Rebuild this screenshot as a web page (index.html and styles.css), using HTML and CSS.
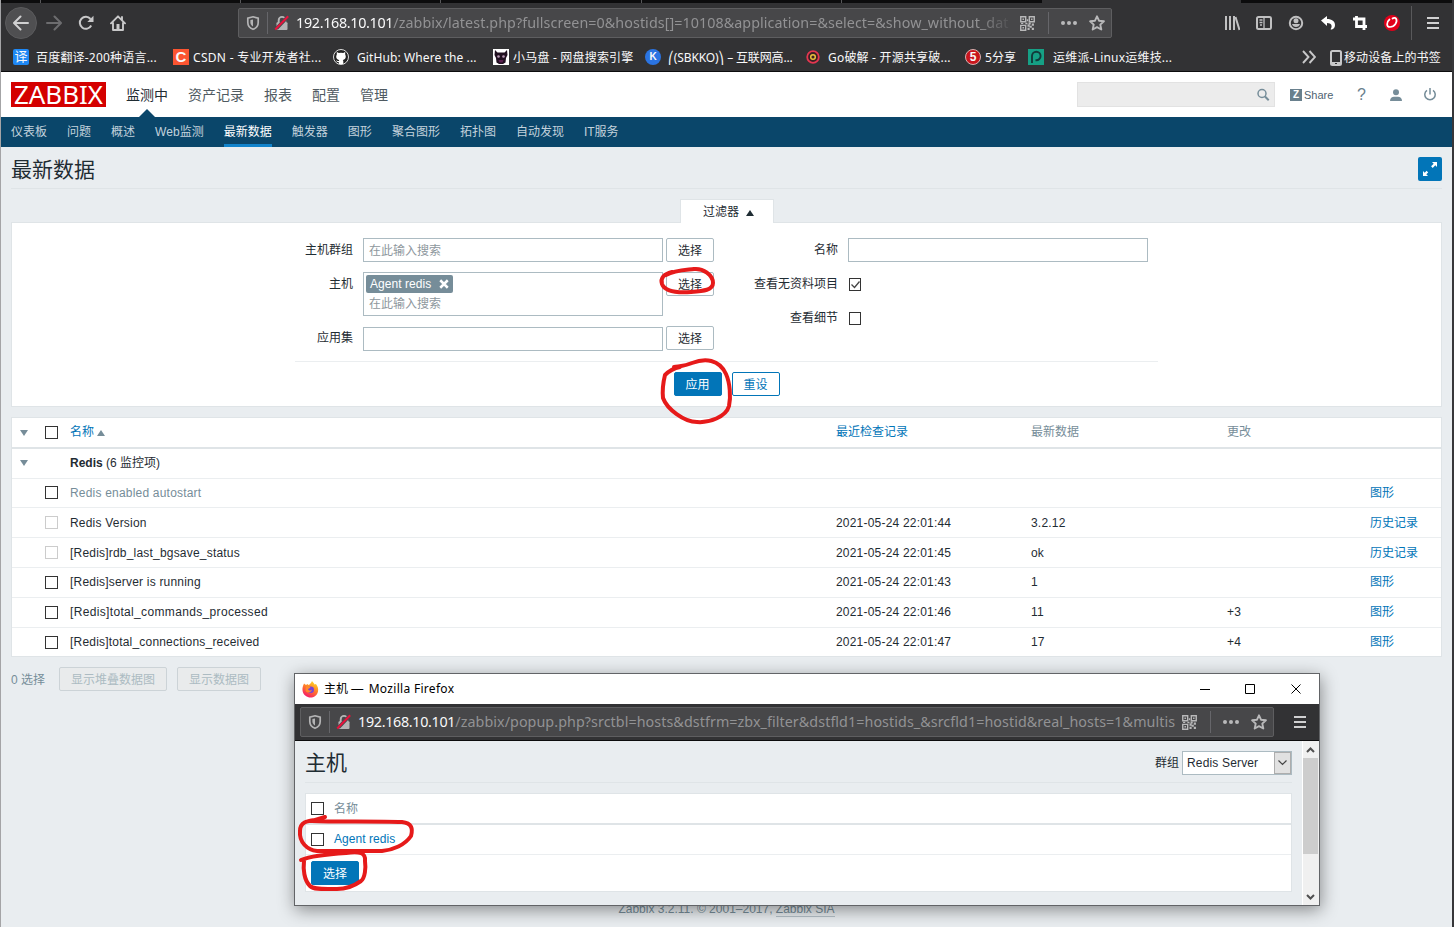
FILE: index.html
```html
<!DOCTYPE html>
<html lang="zh-CN">
<head>
  <meta charset="UTF-8">
  <meta name="viewport" content="width=device-width, initial-scale=1.0">
  <title>最新数据</title>
  <link rel="stylesheet" href="styles.css">
</head>
<body>
  <!-- shared icons -->
  <svg class="defs" width="0" height="0">
    <symbol id="shield" viewBox="0 0 16 16"><path d="M8 1.8 13.2 3.2V7.5C13.2 11 11 13.2 8 14.3 5 13.2 2.8 11 2.8 7.5V3.2Z" fill="none" stroke="#b4b4b5" stroke-width="1.7"/><path d="M8 4.5v7C6.4 10.700 5.400 9.300 5.400 7.300V5.100Z" fill="#b4b4b5"/></symbol>
    <symbol id="lock" viewBox="0 0 16 16"><path d="M4.700 8V5.200a3.300 3.300 0 0 1 6.600 0V8" fill="none" stroke="#b4b4b5" stroke-width="1.900"/><rect x="2.500" y="7.300" width="11" height="7.700" rx="1" fill="#b4b4b5"/><path d="M2.500 13.500 13.500 2" stroke="#48484a" stroke-width="3.400"/><path d="M1.200 14.500 14.200 1.200" stroke="#e8123c" stroke-width="2"/></symbol>
    <symbol id="qr" viewBox="0 0 14 14"><path d="M.7.7h4.600v4.600H.7zM8.700.7h4.600v4.600H8.700zM.7 8.700h4.600v4.600H.7z" fill="none" stroke="#b9b9ba" stroke-width="1.300"/><path d="M2.300 2.300h1.400v1.400H2.300zM10.300 2.300h1.400v1.400h-1.400zM2.300 10.300h1.400v1.400H2.300zM6.300 3h1.400v2H6.300zM5 6.300h2v1.400H5zM8 6h2v2H8zM11 7h2v2h-2zM7 8h2v2H7zM9 9h2v2H9zM11 11h2v2h-2zM7 11h2v2H7zM1 6.300h2v1.200H1z" fill="#b9b9ba"/></symbol>
    <symbol id="star" viewBox="0 0 16 16"><path d="m8 1.300 2 4.400 4.900.6-3.600 3.300 1 4.900L8 12.100l-4.300 2.400 1-4.900L1.100 6.300 6 5.700Z" fill="none" stroke="#b9b9ba" stroke-width="1.900" stroke-linejoin="round"/></symbol>
    <symbol id="dots" viewBox="0 0 16 16"><g fill="#b9b9ba"><circle cx="2" cy="8" r="2"/><circle cx="8" cy="8" r="2"/><circle cx="14" cy="8" r="2"/></g></symbol>
    <symbol id="menu" viewBox="0 0 12 12"><path d="M0 1h12M0 6h12M0 11h12" stroke="#d0d0d1" stroke-width="2"/></symbol>
  </svg>

  <!-- browser toolbar -->
  <div class="browser">
    <div class="tabs"><i></i><i></i><i></i><i></i><i></i><i></i><i class="on"></i><i></i></div>
    <div class="toolbar">
      <span class="back"><svg width="16" height="16" viewBox="0 0 16 16" fill="none" stroke="#d0d0d1" stroke-width="2" stroke-linecap="round" stroke-linejoin="round"><path d="M15 8H1.500M7.500 1.500 1 8l6.500 6.500"/></svg></span>
      <svg width="16" height="16" viewBox="0 0 16 16" fill="none" stroke="#6d6d6f" stroke-width="2" stroke-linecap="round" stroke-linejoin="round"><path d="M1 8h13.500M8.500 1.500 15 8l-6.500 6.500"/></svg>
      <svg width="16" height="16" viewBox="0 0 16 16"><path d="M13.200 10.500A6 6 0 1 1 12.500 4" fill="none" stroke="#c8c8c9" stroke-width="2"/><path d="M15.500.8V7H9.300Z" fill="#c8c8c9"/></svg>
      <svg width="16" height="16" viewBox="0 0 16 16"><path d="M1 8.300 8 1.300l7 7M3 8v7h10V8M12 2v3" fill="none" stroke="#c8c8c9" stroke-width="1.900" stroke-linejoin="round" stroke-linecap="round"/><path d="M6.500 9h3v6h-3z" fill="#c8c8c9"/></svg>
      <div class="url">
        <svg width="16" height="16"><use href="#shield"/></svg>
        <i class="bar"></i>
        <svg width="16" height="16"><use href="#lock"/></svg>
        <div class="addr"><b>192.168.10.101</b>/zabbix/latest.php?fullscreen=0&amp;hostids[]=10108&amp;application=&amp;select=&amp;show_without_dat</div>
        <svg class="qr" width="15" height="15"><use href="#qr"/></svg>
        <i class="bar"></i>
        <svg class="dots" width="16" height="16"><use href="#dots"/></svg>
        <svg width="16" height="16"><use href="#star"/></svg>
      </div>
      <div class="tools">
        <svg width="16" height="16" viewBox="0 0 16 16"><path d="M2 1v14M6 1v14M10 1v14M11.500 2l4 13" stroke="#c0c0c1" stroke-width="2"/></svg>
        <svg width="16" height="16" viewBox="0 0 16 16"><rect x="1" y="2" width="14" height="12" rx="1.500" fill="none" stroke="#c0c0c1" stroke-width="2"/><path d="M8 2v12M3.500 5h3M3.500 7.500h3M4 10h2" stroke="#c0c0c1" stroke-width="1.300"/></svg>
        <svg width="16" height="16" viewBox="0 0 16 16"><circle cx="8" cy="8" r="6.200" fill="none" stroke="#c0c0c1" stroke-width="2"/><circle cx="8" cy="5.700" r="2.500" fill="#c0c0c1"/><path d="M4 9h8c-.5 2-2 3-4 3S4.500 11 4 9Z" fill="#c0c0c1"/></svg>
        <svg width="16" height="16" viewBox="0 0 16 16"><path d="M1 5.500 7 1v3c5 0 8 2.500 8 6 0 2-1 3.500-3 4.500-1 .3-2-.3-1-1C12.500 11 11.500 8 7 8v3Z" fill="#fff"/></svg>
        <svg width="16" height="16" viewBox="0 0 16 16"><path d="M1 4h11v11M4.500 1v10.500H15" fill="none" stroke="#fff" stroke-width="2.800"/></svg>
        <svg width="16" height="16" viewBox="0 0 16 16"><circle cx="8" cy="8" r="8" fill="#e2001a"/><path d="M5.500 4.500C2.500 7 2 12 6 12c4.500 0 8-5 6-8.500-.7-1-2.500-.8-3.500 0" fill="none" stroke="#fff" stroke-width="1.700" stroke-linecap="round"/></svg>
      </div>
      <i class="split"></i>
      <svg width="12" height="12"><use href="#menu"/></svg>
    </div>
    <div class="bookmarks">
      <span><i class="fav fanyi">译</i></span><span>百度翻译-200种语言...</span>
      <span><i class="fav csdn">C</i></span><span class="wide">CSDN - 专业开发者社...</span>
      <span><svg width="16" height="16" viewBox="0 0 16 16"><circle cx="8" cy="8" r="7.500" fill="#222" stroke="#ddd"/><path d="M3.800 3l2 1a7 7 0 0 1 4.400 0l2-1v2.500c1.300 2.500.3 5-2.400 5.400l.5 1V15H5.800v-2c-1.500.3-2.300-.8-2.800-1.600 1.200 0 1.400 1 2.900.5l.3-1C3.500 10.500 2.500 8 3.800 5.500Z" fill="#fff"/></svg></span><span class="lat">GitHub: Where the ...</span>
      <span><svg width="16" height="16" viewBox="0 0 16 16"><path d="M0 0h16v16H0z" fill="#fff"/><path d="M2 1l2.500 2.500h7L14 1l.5 5-1.500 3-.5 4.500L10 15H6l-2.500-1.500L3 9 1.500 6Z" fill="#201020"/><g fill="#b89ab5"><circle cx="5.500" cy="7.500" r="1.300"/><circle cx="10.500" cy="7.500" r="1.300"/></g><path d="M5.500 11h5l-1 2.500h-3Z" fill="#5a2150"/></svg></span><span>小马盘 - 网盘搜索引擎</span>
      <span><i class="fav round k">K</i></span><span class="narrow">⎛(SBKKO)⎞ – 互联网高...</span>
      <span><svg width="16" height="16" viewBox="0 0 16 16"><circle cx="8" cy="8" r="5.800" fill="#3c2024" stroke="#e43650" stroke-width="1.800"/><circle cx="8" cy="8" r="2.300" fill="none" stroke="#e9bf3c" stroke-width="1.500"/></svg></span><span>Go破解 - 开源共享破...</span>
      <span><i class="fav round five">5</i></span><span class="lat">5分享</span>
      <span><svg width="16" height="16" viewBox="0 0 16 16"><path d="M0 0h16v16H0z" fill="#16a085"/><path d="M4 14V7a4.300 4.300 0 1 1 4.300 4.300H7.500" fill="none" stroke="#123b3b" stroke-width="1.900"/></svg></span><span>运维派-Linux运维技...</span>
      <span><svg width="14" height="14" viewBox="0 0 14 14"><path d="m1 1 5.500 6L1 13M7.500 1 13 7l-5.500 6" fill="none" stroke="#c8c8c9" stroke-width="1.900"/></svg></span>
      <span><svg width="12" height="16" viewBox="0 0 12 16"><rect x="1" y="1" width="10" height="14" rx="1.500" fill="none" stroke="#c8c8c9" stroke-width="2"/><path d="M1 13h10" stroke="#c8c8c9" stroke-width="2"/><path d="M5 13.500h2" stroke="#323234"/></svg></span><span class="lat">移动设备上的书签</span>
    </div>
  </div>

  <div class="page">
    <header class="header">
      <svg class="logo" width="95" height="25" viewBox="0 0 95 25"><path d="M0 0h95v25H0z" fill="#d40000"/><text x="3" y="21.500" textLength="89" lengthAdjust="spacingAndGlyphs">ZABBIX</text></svg>
      <nav class="top-nav"><a class="on">监测中</a><a>资产记录</a><a>报表</a><a>配置</a><a>管理</a></nav>
      <div class="search"><svg width="14" height="14" viewBox="0 0 14 14" fill="none" stroke="#768d99" stroke-width="1.500"><circle cx="6" cy="5.500" r="4"/><path d="m9 8.500 3.700 3.700" stroke-width="2"/></svg></div>
      <div class="share"><i>Z</i>Share</div>
      <span class="help">?</span>
      <svg class="user" width="12" height="12" viewBox="0 0 12 12" fill="#768d99"><circle cx="6" cy="3.200" r="3"/><path d="M0 12c0-3 2-4.300 4-4.300h4c2 0 4 1.300 4 4.300Z"/></svg>
      <svg width="12" height="13" viewBox="0 0 12 13" fill="none" stroke="#768d99" stroke-width="1.500"><path d="M3 2.300A5.200 5.200 0 1 0 9 2.300M6 0v6.500"/></svg>
    </header>
    <nav class="sub-nav"><a>仪表板</a><a>问题</a><a>概述</a><a><em>Web</em>监测</a><a class="on">最新数据</a><a>触发器</a><a>图形</a><a>聚合图形</a><a>拓扑图</a><a>自动发现</a><a>IT服务</a></nav>

    <div class="title">
      <h1>最新数据</h1>
      <span class="full"><svg width="14" height="14" viewBox="0 0 14 14" fill="#fff"><path d="M9 0h5v5l-1.700-1.700-2.600 2.600-1.600-1.600 2.600-2.600ZM0 9l1.700 1.700L3.600 8.800l1.600 1.600-1.900 1.900L5 14H0Z"/></svg></span>
    </div>

    <div class="filter-tab">过滤器 <i class="tri up dark"></i></div>
    <section class="filter">
      <div class="fields">
        <div class="col left">
          <div class="row"><label>主机群组</label><div class="input">在此输入搜索</div><button>选择</button></div>
          <div class="row tall"><label>主机</label><div class="input multi"><span class="chip">Agent redis <svg width="10" height="10" viewBox="0 0 8 8"><path d="m1 1 6 6M7 1 1 7" stroke="#fff" stroke-width="2"/></svg></span><span>在此输入搜索</span></div><button>选择</button></div>
          <div class="row apps"><label>应用集</label><div class="input"></div><button>选择</button></div>
        </div>
        <div class="col right">
          <div class="row"><label>名称</label><div class="input"></div></div>
          <div class="row"><label>查看无资料项目</label><i class="check"><svg width="11" height="11" viewBox="0 0 11 11"><path d="m1.500 5.500 3 3 5-6" fill="none" stroke="#444" stroke-width="1.300"/></svg></i></div>
          <div class="row"><label>查看细节</label><i class="check"></i></div>
        </div>
      </div>
      <div class="actions"><button class="primary">应用</button><button class="outline">重设</button></div>
    </section>

    <section class="list">
      <div class="tr head"><i class="tri down"></i><i class="box"></i><span class="blue">名称<i class="tri up"></i></span><span class="blue">最近检查记录</span><span>最新数据</span><span>更改</span><span></span></div>
      <div class="tr group"><i class="tri down"></i><span></span><span><b>Redis</b> (6 监控项)</span></div>
      <div class="tr r29"><span></span><i class="box"></i><span class="grey">Redis enabled autostart</span><span></span><span></span><span></span><a>图形</a></div>
      <div class="tr"><span></span><i class="box off"></i><span>Redis Version</span><span>2021-05-24 22:01:44</span><span>3.2.12</span><span></span><a>历史记录</a></div>
      <div class="tr"><span></span><i class="box off"></i><span>[Redis]rdb_last_bgsave_status</span><span>2021-05-24 22:01:45</span><span>ok</span><span></span><a>历史记录</a></div>
      <div class="tr raised"><span></span><i class="box"></i><span>[Redis]server is running</span><span>2021-05-24 22:01:43</span><span>1</span><span></span><a>图形</a></div>
      <div class="tr raised"><span></span><i class="box"></i><span class="wide">[Redis]total_commands_processed</span><span>2021-05-24 22:01:46</span><span>11</span><span>+3</span><a>图形</a></div>
      <div class="tr last"><span></span><i class="box"></i><span>[Redis]total_connections_received</span><span>2021-05-24 22:01:47</span><span>17</span><span>+4</span><a>图形</a></div>
    </section>
    <div class="bulk"><span>0 选择</span><button>显示堆叠数据图</button><button>显示数据图</button></div>
    <footer>Zabbix 3.2.11. © 2001–2017, <u>Zabbix SIA</u></footer>
  </div>

  <!-- host picker window -->
  <div class="popup">
    <div class="win-bar">
      <svg width="17" height="17" viewBox="0 0 17 17"><defs><linearGradient id="fx" x1=".8" y1="0" x2=".3" y2="1"><stop offset="0" stop-color="#ffe226"/><stop offset=".5" stop-color="#ff7a2a"/><stop offset="1" stop-color="#f5156c"/></linearGradient></defs><path d="M1 5 2 2.500 4 4l1.500-1 1 1C8 3.500 9 2 10 0c1 1.500 2 2 2.500 3.500L14 3c2 2.500 2.500 5 2 7.500-1 4-4 6-7.500 6S1.500 14 .7 10.500C.3 8.500.5 6.500 1 5Z" fill="url(#fx)"/><circle cx="8.700" cy="8.700" r="3.300" fill="#7543d9"/><path d="M4 5.500c2-.5 3.500 0 4.500 1-1 1-2 1-2.500 1.700 1 1.800 3 1.600 4 .3-.5 3-5 4.500-6.500 1Z" fill="#ff8a2b"/></svg>
      <span>主机 — <em>Mozilla Firefox</em></span>
      <svg class="win-btns" width="102" height="12" viewBox="0 0 102 12" fill="none" stroke="#000"><path d="M0 6.500h10M91.500 1.500l9 9M100.500 1.500l-9 9"/><path d="M45.500 1.500h9v9h-9z"/></svg>
    </div>
    <div class="popup-tools">
      <div class="url">
        <svg width="16" height="16"><use href="#shield"/></svg>
        <i class="bar"></i>
        <svg width="16" height="16"><use href="#lock"/></svg>
        <div class="addr"><b>192.168.10.101</b>/zabbix/popup.php?srctbl=hosts&amp;dstfrm=zbx_filter&amp;dstfld1=hostids_&amp;srcfld1=hostid&amp;real_hosts=1&amp;multis</div>
        <svg class="qr" width="15" height="15"><use href="#qr"/></svg>
        <i class="bar"></i>
        <svg class="dots" width="16" height="16"><use href="#dots"/></svg>
        <svg width="16" height="16"><use href="#star"/></svg>
      </div>
      <svg width="12" height="12"><use href="#menu"/></svg>
    </div>
    <div class="popup-body">
      <div class="popup-main">
        <div class="popup-title"><h1>主机</h1><label>群组</label><div class="select"><span>Redis Server</span><i><svg width="9" height="6" viewBox="0 0 9 6"><path d="m.5.5 4 4 4-4" fill="none" stroke="#444" stroke-width="1.200"/></svg></i></div></div>
        <div class="hosts">
          <div class="host head"><i class="box"></i><span>名称</span></div>
          <div class="host"><i class="box"></i><a>Agent redis</a></div>
          <div class="host foot"><button class="primary">选择</button></div>
        </div>
      </div>
      <div class="scroll">
        <svg width="9" height="6" viewBox="0 0 9 6"><path d="m1 5 3.500-3.500L8 5" fill="none" stroke="#505050" stroke-width="2"/></svg>
        <i></i>
        <svg width="9" height="6" viewBox="0 0 9 6"><path d="m1 1 3.500 3.500L8 1" fill="none" stroke="#505050" stroke-width="2"/></svg>
      </div>
    </div>
  </div>

  <!-- red pen marks -->
  <svg class="marks" width="1454" height="927" viewBox="0 0 1454 927">
    <path d="M666 275C675 270 686 270 694 269C703 268 713 275 713 283C713 290 704 291 691 292C677 293 665 292 662 284C660 278 664 274 672 272"/>
    <path d="M674 367C680 366 685 366 692 363C705 358 719 359 726 374C730 383 731 397 729 406C726 417 709 423 697 422C684 422 667 409 663 398C662 388 664 379 665 375C670 370 675 368 680 367"/>
    <path d="M325 817 312 821C335 822 376 821 402 822C412 823 413 829 411 836C405 845 393 850 382 851H317C307 850 299 842 300 831C300 822 307 821 315 820"/>
    <path d="M301 860C311 856 330 854 346 853C360 851 366 853 365 861C366 868 365 878 361 881C354 886 345 889 337 889C324 889 314 890 310 886C304 880 303 869 304 861"/>
  </svg>
</body>
</html>
```
FILE: styles.css
```css
* {
  box-sizing: border-box;
}

body {
  margin: 0;
  width: 1454px;
  height: 927px;
  overflow: hidden;
  position: relative;
  background: #e9edf0;
  border-left: 1px solid #a4a4a6;
  border-right: 2px solid #37373a;
  font: 12px/16px "Liberation Sans", "Noto Sans CJK SC", sans-serif;
  color: #1f2c33;
}

svg {
  display: block;
  flex: none;
}

i, em {
  font-style: normal;
}

.defs {
  position: absolute;
}

/* browser chrome */
.browser {
  height: 72px;
  background: #323234;
  border-bottom: 1px solid #0c0c0d;
  color: #f9f9fa;
}

.tabs {
  display: grid;
  grid-template-columns: 40px 200px 200px 201px 200px 200px 199px 1fr;
  height: 3px;
  background: #0c0c0d;
}

.tabs i {
  border-right: 1px solid #58585a;
}

.tabs i:nth-child(n + 6) {
  border-right: 0;
}

.tabs .on {
  background: #323234;
}

.toolbar {
  display: flex;
  align-items: center;
  height: 40px;
  padding: 0 13px 0 4px;
  gap: 16px;
}

.back {
  display: flex;
  align-items: center;
  justify-content: center;
  width: 32px;
  height: 32px;
  margin-right: -7px;
  border-radius: 50%;
  background: #4f4f51;
  border: 1px solid #5b5b5d;
}

.url {
  display: flex;
  align-items: center;
  width: 874px;
  height: 30px;
  padding: 0 6px;
  background: #474749;
  border: 1px solid #5e5e60;
  border-radius: 2px;
}

.toolbar .url {
  margin-left: 96px;
}

.bar {
  width: 1px;
  height: 22px;
  margin: 0 7px 0 6px;
  background: #66666a;
}

.url svg + .bar + svg:not(.dots) {
  margin-left: -1px;
}

.addr {
  flex: 1;
  overflow: hidden;
  white-space: nowrap;
  margin-left: 6px;
  font: 14.300px/24px "Noto Sans", sans-serif;
  letter-spacing: 0.070px;
  color: #929294;
}

.toolbar .addr {
  -webkit-mask-image: linear-gradient(to right, #000 95%, transparent);
  mask-image: linear-gradient(to right, #000 95%, transparent);
}

.addr b {
  font-weight: 400;
  letter-spacing: -0.300px;
  color: #f9f9fa;
}

.qr {
  margin: 0 7px 0 6px;
}

.dots {
  margin: 0 12px 0 5px;
}

.tools {
  display: flex;
  gap: 16px;
  margin-left: auto;
}

.split {
  width: 1px;
  height: 34px;
  margin: 0 -1px 0 -5px;
  background: #59595b;
}

.bookmarks {
  display: grid;
  grid-template-columns: 23px 137px 20px 140px 24px 136px 20px 132px 23px 137px 23px 137px 20px 43px 25px 249px 28px 14px 110px;
  align-items: center;
  height: 28px;
  padding-left: 12px;
  white-space: nowrap;
  letter-spacing: 0.200px;
  font: 12px/18px "Noto Sans", "Noto Sans CJK SC", sans-serif;
}

.bookmarks span:nth-child(even),
.bookmarks span:last-child {
  padding-top: 1px;
}

.bookmarks .lat {
  letter-spacing: 0.100px;
}

.bookmarks .wide {
  letter-spacing: 0.300px;
}

.bookmarks .narrow {
  letter-spacing: -0.150px;
}

.fav {
  display: block;
  width: 16px;
  height: 16px;
  text-align: center;
  letter-spacing: 0;
  font: 700 13px/16px "Liberation Sans", "Noto Sans CJK SC", sans-serif;
}

.fanyi {
  background: #1e88f5;
  border-radius: 2px;
  font-weight: 400;
}

.csdn {
  background: #fc5531;
  font-size: 15px;
}

.round {
  border-radius: 50%;
  font-size: 10px;
}

.k {
  background: #2b74e2;
}

.five {
  background: #c8161d;
  border: 1px solid #d8b0b0;
  font-size: 12px;
  line-height: 14px;
}

/* zabbix header */
.header {
  display: flex;
  align-items: center;
  height: 45px;
  padding: 0 16px 0 10px;
  background: #fff;
}

.logo {
  overflow: visible;
}

.logo text {
  font: 26px "Noto Sans", sans-serif;
  fill: #fff;
}

.top-nav {
  display: flex;
  align-self: stretch;
  gap: 20px;
  margin-left: 20px;
  font-size: 14px;
  line-height: 46px;
  color: #4f5a61;
}

.top-nav .on {
  position: relative;
  color: #1f2c33;
}

.top-nav .on::after {
  content: "";
  position: absolute;
  left: 13px;
  bottom: 0;
  border: 8px solid transparent;
  border-top: 0;
  border-bottom-color: #0a466a;
}

.search {
  display: flex;
  align-items: center;
  justify-content: flex-end;
  width: 198px;
  height: 25px;
  margin-left: auto;
  padding-right: 4px;
  background: #ececec;
  border: 1px solid #e2e2e2;
}

.share {
  display: flex;
  align-items: center;
  gap: 2px;
  width: 44px;
  margin-left: 15px;
  font-size: 11px;
  color: #4f6371;
}

.share i {
  width: 12px;
  height: 12px;
  background: #69808d;
  color: #fff;
  font: 700 10px/12px "Liberation Sans", sans-serif;
  text-align: center;
}

.help {
  width: 8px;
  margin-left: 23px;
  font-size: 16px;
  color: #69808d;
}

.user {
  margin: 0 22px 0 25px;
}

.sub-nav {
  display: flex;
  gap: 20px;
  height: 30px;
  padding-left: 10px;
  background: #0a466a;
  color: #c3d2dc;
  line-height: 31px;
}

.sub-nav em {
  letter-spacing: 0.100px;
}

.sub-nav .on {
  color: #fff;
  border-bottom: 3px solid #1183cb;
}

/* page title */
h1 {
  margin: 0;
  padding-top: 2px;
  font-size: 21px;
  line-height: 24px;
  font-weight: 400;
}

.title {
  display: flex;
  align-items: center;
  justify-content: space-between;
  height: 42px;
  margin: 0 10px;
  padding-top: 2px;
  border-bottom: 1px solid #dfe4e7;
}

.full {
  display: flex;
  align-items: center;
  justify-content: center;
  width: 24px;
  height: 24px;
  background: #0275b8;
  border-radius: 2px;
}

/* filter */
.filter-tab {
  position: relative;
  width: 94px;
  height: 24px;
  margin: 10px 0 -1px 679px;
  padding: 0 0 0 22px;
  background: #fff;
  border: 1px solid #dfe4e7;
  border-bottom: 0;
  line-height: 25px;
}

.tri {
  display: inline-block;
  width: 0;
  height: 0;
  border: 4px solid transparent;
}

.tri.up {
  border-top: 0;
  border-bottom: 6px solid #768d99;
  margin-left: 3px;
}

.tri.down {
  border-bottom: 0;
  border-top: 6px solid #768d99;
  margin-left: 8px;
}

.tri.dark {
  border-bottom-color: #1f2c33;
  margin-left: 4px;
}

.filter {
  height: 185px;
  margin: 0 10px 0 10px;
  padding: 15px 283px 0;
  background: #fff;
  border: 1px solid #dfe4e7;
}

.fields {
  display: flex;
  height: 124px;
  border-bottom: 1px solid #ebeef0;
}

.col {
  display: flex;
  flex-direction: column;
  gap: 10px;
}

.left {
  width: 419px;
}

.row {
  display: flex;
  height: 24px;
  line-height: 25px;
}

.tall {
  height: 44px;
}

.apps {
  height: 25px;
}

.apps .input {
  margin-top: 1px;
}

.row label {
  width: 58px;
  margin-right: 10px;
  text-align: right;
  white-space: nowrap;
}

.right label {
  width: 124px;
}

.input {
  width: 300px;
  height: 24px;
  padding-left: 5px;
  border: 1px solid #acbbc2;
  line-height: 24px;
  color: #8e979d;
}

.multi {
  display: flex;
  flex-direction: column;
  align-items: flex-start;
  height: 44px;
  padding-top: 2px;
}

.chip {
  display: flex;
  align-items: center;
  justify-content: space-between;
  width: 87px;
  height: 18px;
  flex: none;
  margin-left: -3px;
  padding: 0 4px;
  background: #768d99;
  border-radius: 2px;
  letter-spacing: 0.050px;
  color: #fff;
}

.multi > span + span {
  line-height: 22px;
}

button {
  width: 48px;
  height: 24px;
  padding: 1px 0 0;
  background: #fff;
  border: 1px solid #acbbc2;
  border-radius: 2px;
  font: inherit;
  line-height: 22px;
  color: #1f2c33;
}

.row button {
  margin-left: 3px;
}

.primary {
  background: #0275b8;
  border-color: #0275b8;
  color: #fff;
}

.outline {
  border-color: #0275b8;
  color: #0275b8;
}

.actions {
  display: flex;
  justify-content: center;
  gap: 10px;
  padding-top: 10px;
}

.check, .box {
  display: block;
  width: 13px;
  height: 13px;
  background: #fff;
  border: 1px solid #333;
}

.check {
  width: 12px;
  margin: 6px 0 0 1px;
}

.box.off {
  border-color: #ccc;
}

/* items table */
.list {
  margin: 10px 10px 0;
  background: #fff;
  border: 1px solid #dfe4e7;
}

.tr {
  display: grid;
  grid-template-columns: 33px 25px 766px 195px 196px 143px 1fr;
  align-items: center;
  height: 30px;
  border-bottom: 1px solid #ebeef0;
  letter-spacing: 0.200px;
  white-space: nowrap;
}

.tr .wide {
  letter-spacing: 0.340px;
}

.tr.head {
  height: 31px;
  border-bottom: 2px solid #dfe4e7;
  color: #768d99;
  letter-spacing: 0;
}

.tr.head span {
  padding-bottom: 1px;
}

.tr.r29 {
  height: 29px;
  padding-bottom: 1px;
}

.tr.group {
  padding-bottom: 2px;
  letter-spacing: 0;
}

.raised span, .raised a {
  padding-bottom: 2px;
}

.tr.last {
  height: 28px;
  border-bottom: 0;
}

.blue, a {
  color: #0275b8;
}

.top-nav a, .sub-nav a {
  color: inherit;
}

.top-nav .on {
  color: #1f2c33;
}

.sub-nav .on {
  color: #fff;
}

.tr a {
  letter-spacing: 0;
}

.grey {
  color: #768d99;
}

.bulk {
  display: flex;
  align-items: center;
  gap: 10px;
  margin: 10px 10px 0;
  color: #768d99;
}

.bulk span {
  width: 38px;
  padding-top: 1px;
}

.bulk button {
  width: 108px;
  background: #e9ebec;
  border-color: #ccd3d7;
  color: #acbbc2;
}

.bulk button + button {
  width: 84px;
}

footer {
  margin-top: 210px;
  text-align: center;
  color: #768d99;
}

footer u {
  text-decoration: none;
  border-bottom: 1px solid #b5c0c7;
}

/* popup window */
.popup {
  position: absolute;
  left: 293px;
  top: 673px;
  width: 1026px;
  height: 233px;
  border: 1px solid #626467;
  background: #e9edf0;
  box-shadow: 1px 4px 16px rgba(0, 0, 0, 0.420);
}

.win-bar {
  display: flex;
  align-items: center;
  height: 30px;
  padding: 0 17px 0 7px;
  background: #fff;
  color: #000;
}

.win-bar span {
  margin-left: 5px;
}

.win-bar em {
  margin-left: 2px;
  font-family: "Noto Sans", sans-serif;
  letter-spacing: 0.300px;
}

.win-btns {
  margin-left: auto;
}

.popup-tools {
  display: flex;
  align-items: center;
  justify-content: space-between;
  height: 37px;
  padding: 0 13px 0 5px;
  background: #323234;
  border-bottom: 1px solid #0c0c0d;
}

.popup-tools .url {
  width: 974px;
}

.popup-body {
  display: flex;
  height: 164px;
}

.popup-main {
  flex: 1;
  padding: 0 10px;
}

.popup-title {
  display: flex;
  align-items: center;
  height: 42px;
  padding-top: 2px;
  border-bottom: 1px solid #dfe4e7;
}

.popup-title h1 {
  padding-top: 1px;
}

.popup-title label {
  margin: 0 3px 0 auto;
}

.select {
  display: flex;
  width: 110px;
  height: 24px;
  border: 1px solid #acbbc2;
  background: #fff;
  line-height: 22px;
}

.select span {
  flex: 1;
  padding-left: 4px;
  letter-spacing: 0.160px;
}

.select i {
  display: flex;
  align-items: center;
  justify-content: center;
  width: 17px;
  background: #e1e1e1;
  border: 1px solid #adadad;
}

.hosts {
  margin-top: 10px;
  background: #fff;
  border: 1px solid #dfe4e7;
}

.host {
  display: flex;
  align-items: center;
  gap: 10px;
  height: 30px;
  padding-left: 5px;
  border-bottom: 1px solid #ebeef0;
}

.host a {
  padding-bottom: 2px;
  letter-spacing: 0.050px;
}

.host.head {
  height: 31px;
  border-bottom: 2px solid #dfe4e7;
  color: #768d99;
}

.host.foot {
  height: 36px;
  border: 0;
}

.scroll {
  display: flex;
  flex-direction: column;
  align-items: center;
  width: 17px;
  padding: 6px 1px 5px 0;
  background: #f0f0f0;
  border-left: 1px solid #fff;
}

.scroll i {
  width: 15px;
  height: 96px;
  margin: 5px 0 auto;
  background: #cdcdcd;
}

.marks {
  position: absolute;
  left: -1px;
  top: 0;
  fill: none;
  stroke: #e61a1a;
  stroke-width: 4;
  stroke-linecap: round;
  stroke-linejoin: round;
}
```
